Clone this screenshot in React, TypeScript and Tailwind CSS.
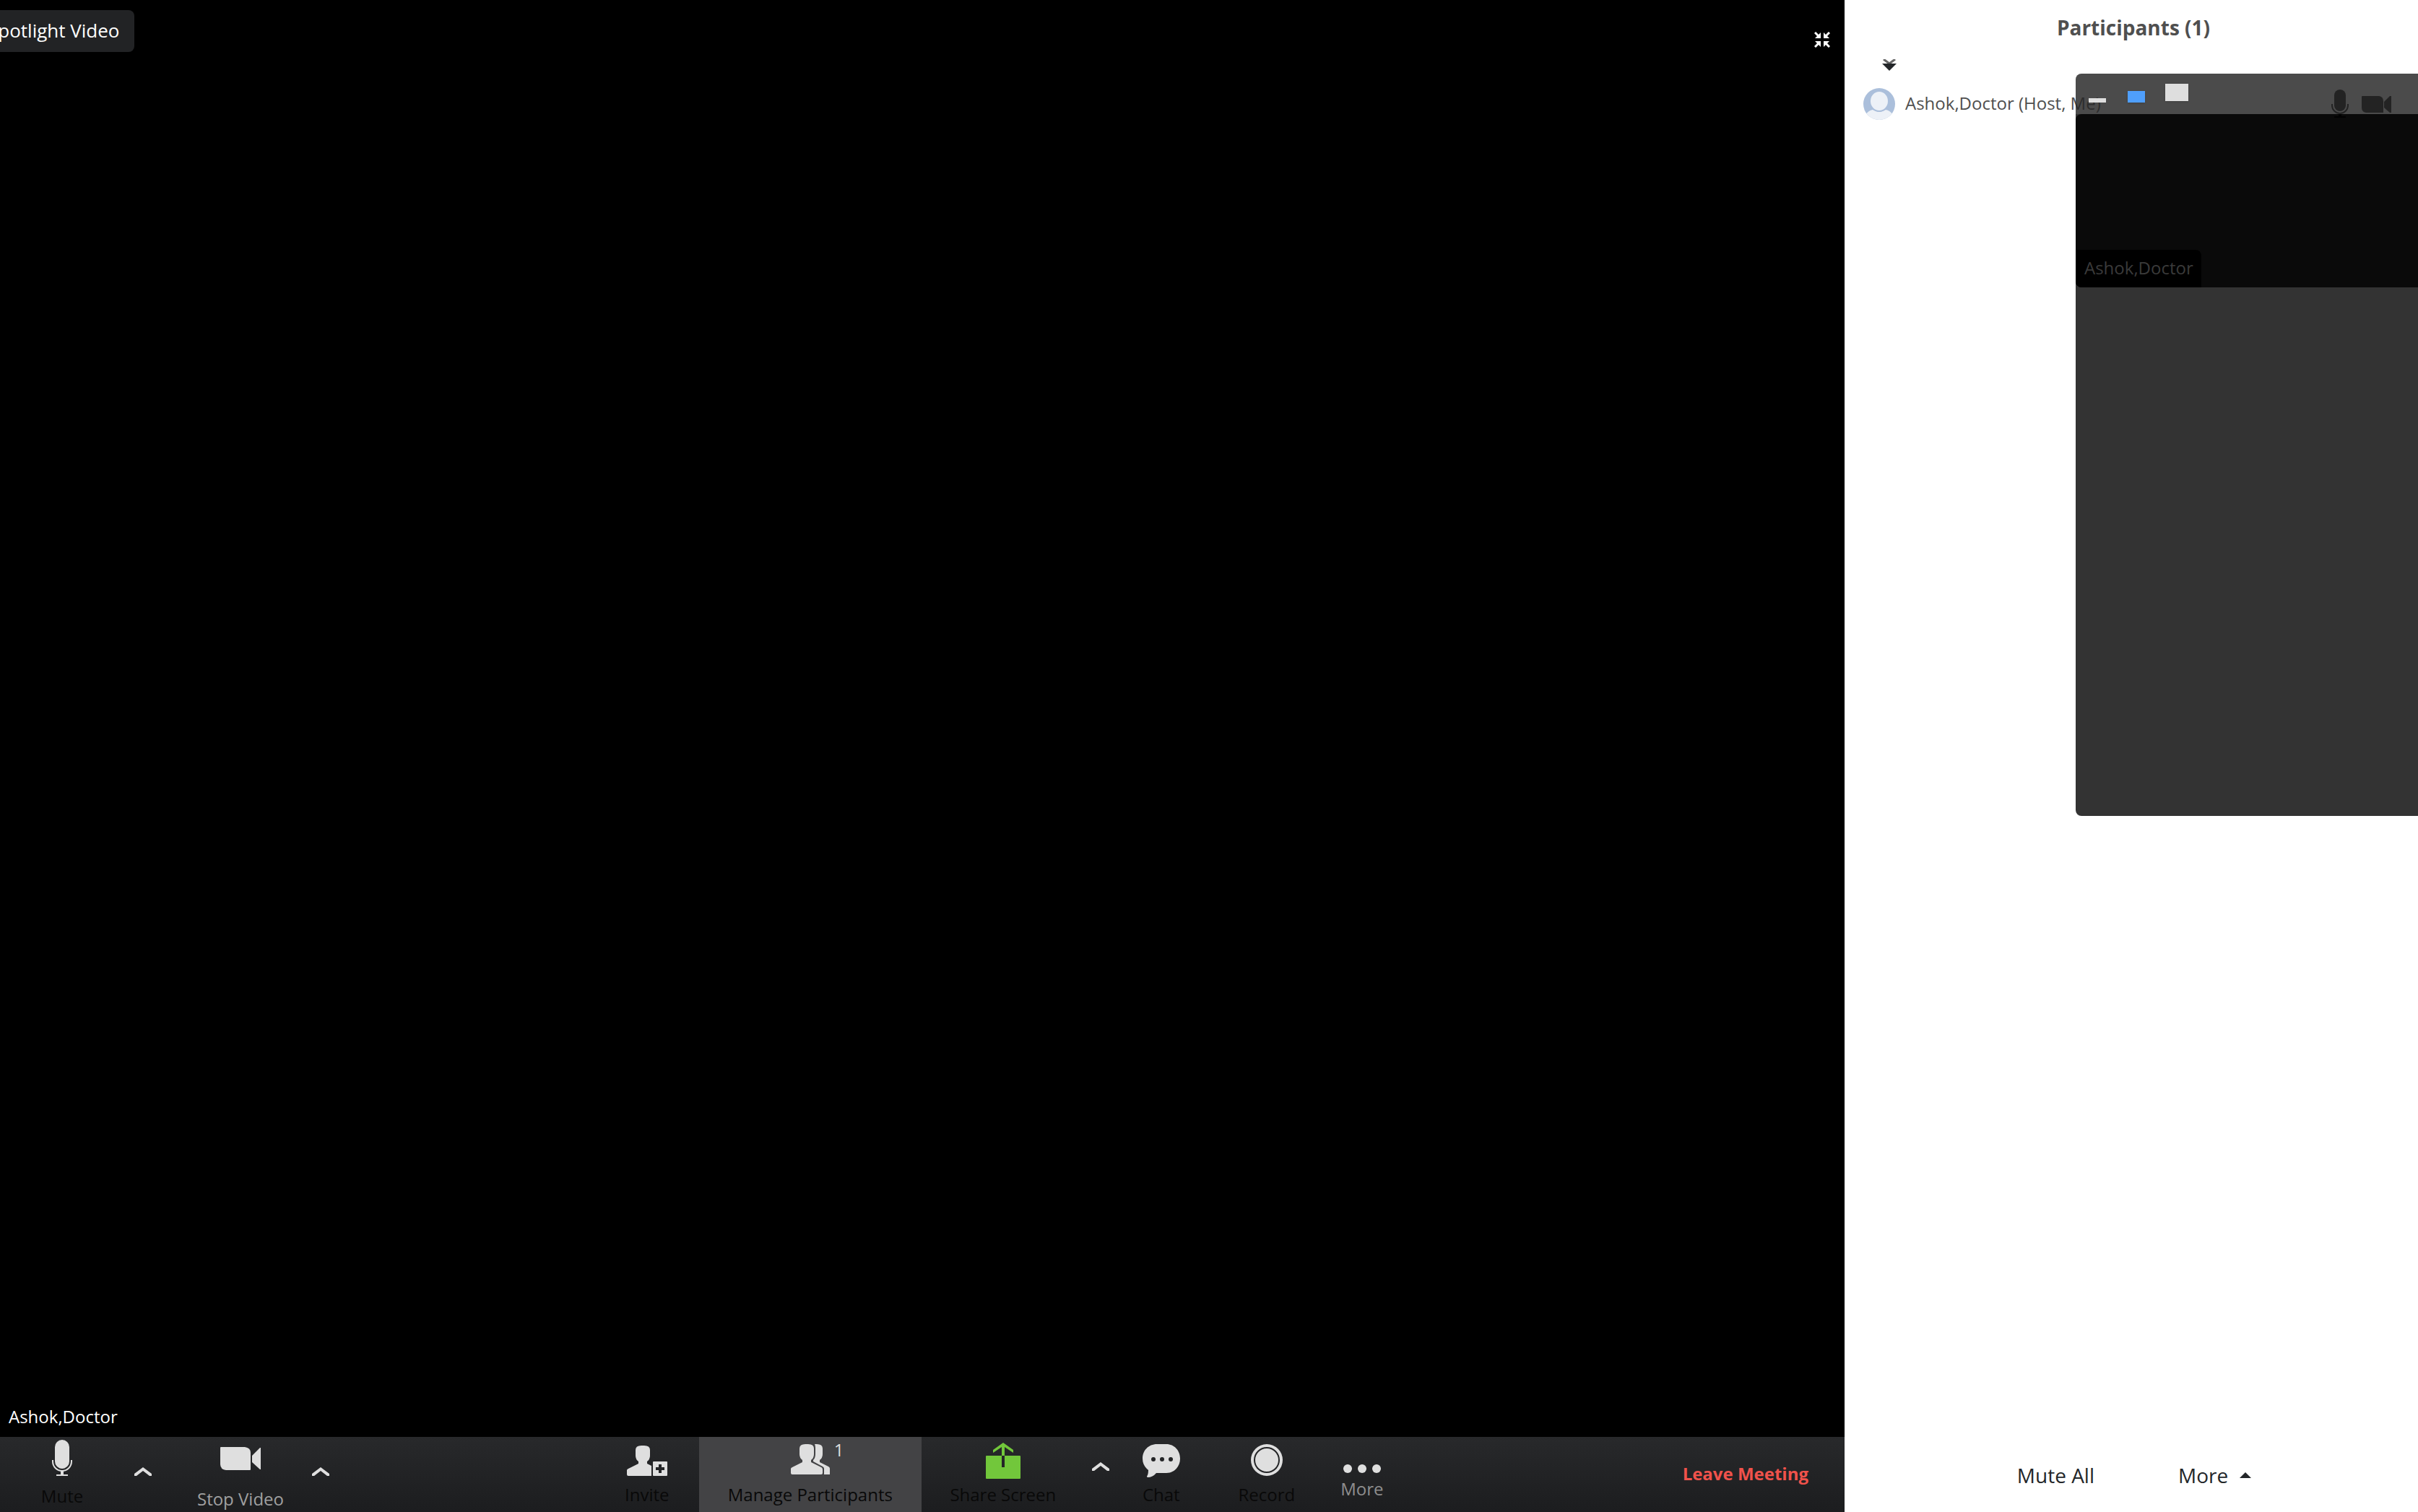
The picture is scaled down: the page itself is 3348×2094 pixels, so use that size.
import React from "react";

const noop = () => {};

function CollapseIcon() {
  return (
    <svg width="22" height="22" viewBox="0 0 22 22" fill="#fff" stroke="#fff" strokeWidth="3" aria-hidden="true">
      {["", "rotate(90 11 11)", "rotate(180 11 11)", "rotate(270 11 11)"].map((t) => (
        <g key={t} transform={t || undefined}>
          <path d="M1 1L6 6" />
          <path d="M1 9L9 9L9 1Z" stroke="none" />
        </g>
      ))}
    </svg>
  );
}

function MicIcon() {
  return (
    <svg width="28" height="50" viewBox="0 0 28 50" fill="#dfdfdf" aria-hidden="true">
      <rect x="4" y="0" width="20" height="40" rx="10" />
      <path d="M1 28V30A13 13 0 0 0 27 30V28" fill="none" stroke="#dfdfdf" strokeWidth="2" />
      <path d="M12 43H16V48H22V50H6V48H12Z" />
    </svg>
  );
}

function CameraIcon() {
  return (
    <svg width="56" height="32" viewBox="0 0 56 32" fill="#dfdfdf" aria-hidden="true">
      <path d="M1 0H34Q42 1 42 8V31Q42 32 41 32H8Q0 31 0 24V1Q0 0 1 0Z" />
      <path d="M44 12L55 1H56V31H55L44 21Z" />
    </svg>
  );
}

function Chevron() {
  return (
    <svg width="24" height="12" viewBox="0 0 24 12" fill="#dfdfdf" className="shrink-0" aria-hidden="true">
      <path d="M12 0L24 9V12H21L12 5L3 12H0V9Z" />
    </svg>
  );
}

function InviteIcon() {
  return (
    <svg width="56" height="42" viewBox="0 0 56 42" fill="#dfdfdf" aria-hidden="true">
      <path d="M12 6Q12 0 20 0H24Q32 0 32 6V14Q32 19 28 22V25L34 28V42H2Q0 42 0 40V34Q0 33 2 32L16 25V22Q12 19 12 14Z" />
      <path fillRule="evenodd" d="M37 22H55Q56 22 56 23V41Q56 42 55 42H37Q36 42 36 41V23Q36 22 37 22ZM44 26V30H40V34H44V38H48V34H52V30H48V26Z" />
    </svg>
  );
}

function PeopleIcon() {
  return (
    <svg width="54" height="42" viewBox="0 0 54 42" fill="#dfdfdf" aria-hidden="true">
      <path d="M12 6Q12 0 20 0H24Q32 0 32 6V14Q32 19 28 22V25L42 32Q44 33 44 35V40Q44 42 42 42H2Q0 42 0 40V34Q0 33 2 32L16 25V22Q12 19 12 14Z" />
      <path d="M33 0H36Q44 0 44 6V14Q44 19 40 22V25L52 31Q54 32 54 34V42H46V34Q46 32 44 31L31 24V22Q34 19 34 14V5Q34 2 33 0Z" />
    </svg>
  );
}

function ShareIcon() {
  return (
    <svg width="48" height="50" viewBox="0 0 48 50" fill="#72c73b" aria-hidden="true">
      <path d="M24 0L38 10V14L26 6V18H22V6L10 14V10Z" />
      <path d="M1 18H22V34H26V18H47Q48 18 48 19V49Q48 50 47 50H1Q0 50 0 49V19Q0 18 1 18Z" />
    </svg>
  );
}

function ChatIcon() {
  return (
    <svg width="52" height="46" viewBox="0 0 52 46" aria-hidden="true">
      <path fill="#dfdfdf" d="M20 0H33C44 0 52 9 52 20S44 40 33 40H19Q14 46 7 46Q5 45 7 43Q8 40 8 36C3 32 0 27 0 20C0 9 8 0 20 0Z" />
      <g fill="#242527">
        <circle cx="15" cy="21" r="3" />
        <circle cx="27" cy="21" r="3" />
        <circle cx="39" cy="21" r="3" />
      </g>
    </svg>
  );
}

function RecordIcon() {
  return (
    <svg width="44" height="44" viewBox="0 0 44 44" aria-hidden="true">
      <circle cx="22" cy="22" r="22" fill="#dfdfdf" />
      <circle cx="22" cy="22" r="17" fill="#dfdfdf" stroke="#242527" strokeWidth="2" />
    </svg>
  );
}

function DotsIcon() {
  return (
    <svg width="52" height="12" viewBox="0 0 52 12" fill="#dfdfdf" aria-hidden="true">
      <circle cx="6" cy="6" r="6" />
      <circle cx="26" cy="6" r="6" />
      <circle cx="46" cy="6" r="6" />
    </svg>
  );
}

function Avatar() {
  return (
    <svg width="44" height="44" viewBox="0 0 44 44" className="shrink-0" aria-hidden="true">
      <defs>
        <clipPath id="avatar-circle">
          <circle cx="22" cy="22" r="22" />
        </clipPath>
      </defs>
      <g clipPath="url(#avatar-circle)">
        <rect width="44" height="44" fill="#abbfdb" />
        <path d="M3 37Q7 31 13 30Q22 36 31 30Q37 31 41 37V44H3Z" fill="#edf1f7" />
        <ellipse cx="22" cy="18" rx="13" ry="14" fill="#edf1f7" stroke="#abbfdb" strokeWidth="2" />
      </g>
    </svg>
  );
}

function StatusIcons() {
  return (
    <svg width="84" height="40" viewBox="0 0 84 40" fill="#1c1c1c" className="mr-9 shrink-0" aria-hidden="true">
      <rect x="4" y="0" width="16" height="30" rx="8" />
      <path d="M1 20V22A11 11 0 0 0 23 22V20" fill="none" stroke="#1c1c1c" strokeWidth="2" />
      <path d="M10 34H14V37H20V39H4V37H10Z" />
      <path d="M43 9H66Q72 10 72 16V32H48Q42 31 42 25V10Q42 9 43 9Z" />
      <path d="M73 17L81 9H83V32H81L73 25Z" />
    </svg>
  );
}

function ToolButton({
  icon,
  label,
  className,
  iconClass,
  labelClass = "text-[#090909]",
}: {
  icon: React.ReactNode;
  label: string;
  className: string;
  iconClass: string;
  labelClass?: string;
}) {
  return (
    <button onClick={noop} className={`flex h-full shrink-0 flex-col items-center whitespace-nowrap text-2xl ${className}`}>
      <span className={`flex items-start ${iconClass}`}>{icon}</span>
      <span className={labelClass}>{label}</span>
    </button>
  );
}

function Toolbar() {
  return (
    <nav aria-label="Meeting controls" className="flex h-[104px] shrink-0 justify-between bg-linear-to-b from-[#28292b] to-[#1c1d1f]">
      <div className="flex">
        <ToolButton className="w-[172px]" icon={<MicIcon />} label="Mute" iconClass="h-[66px] pt-1" />
        <button aria-label="Audio options" className="flex w-[52px] justify-center pt-[42px]"><Chevron /></button>
        <ToolButton className="ml-2.5 w-[198px]" icon={<CameraIcon />} label="Stop Video" iconClass="h-[70px] pt-3.5" labelClass="text-[#a0a0a0]" />
        <button aria-label="Video options" className="flex w-6 justify-center pt-[42px]"><Chevron /></button>
      </div>
      <div className="mr-7 flex">
        <ToolButton className="w-[144px]" icon={<InviteIcon />} label="Invite" iconClass="h-16 pt-3" />
        <ToolButton
          className="w-[308px] bg-[#434345]"
          icon={<span className="relative"><PeopleIcon /><span className="absolute left-[60px] -top-1 text-2xl leading-6 text-[#dfdfdf]">1</span></span>}
          label="Manage Participants"
          iconClass="h-16 pt-2.5"
        />
        <ToolButton className="w-[226px]" icon={<ShareIcon />} label="Share Screen" iconClass="h-16 pt-2" />
        <button aria-label="Share options" className="flex w-11 justify-center pt-[35px]"><Chevron /></button>
        <ToolButton className="w-[124px]" icon={<ChatIcon />} label="Chat" iconClass="h-16 pt-2.5" />
        <ToolButton className="w-[168px]" icon={<RecordIcon />} label="Record" iconClass="h-16 pt-2.5" />
        <ToolButton className="w-[96px]" icon={<DotsIcon />} label="More" iconClass="h-14 pt-[38px]" labelClass="text-[#8e8e8e]" />
      </div>
      <button className="mr-[50px] pb-0.5 text-2xl font-bold text-[#f0524b]">Leave Meeting</button>
    </nav>
  );
}

function FloatingVideo() {
  return (
    <section aria-label="Floating video" className="absolute left-80 right-0 top-[102px] h-[1028px] overflow-hidden rounded-l-lg bg-black/80">
      <div className="flex h-14 items-start bg-white/12">
        <button aria-label="Minimize" className="ml-[18px] mt-[34px] h-1.5 w-6 bg-[#dedede]" />
        <button aria-label="Small view" className="ml-[30px] mt-6 h-4 w-6 bg-[#4f9ffc] shadow-sm" />
        <button aria-label="Large view" className="ml-7 mt-3.5 h-6 w-8 bg-[#dedede] shadow-sm" />
      </div>
      <div className="flex h-60 items-end overflow-hidden rounded-l-lg bg-black/80">
        <div className="flex h-[52px] w-[174px] items-center rounded-tr-lg bg-black pb-0.5 pl-3 text-2xl text-[#3a3a3a]">Ashok,Doctor</div>
      </div>
    </section>
  );
}

export default function App() {
  return (
    <div className="flex h-screen overflow-hidden bg-white font-['Open_Sans',sans-serif]">
      <main className="flex min-w-0 flex-1 flex-col bg-black text-white">
        <div className="flex items-start justify-between overflow-hidden pt-3.5">
          <button className="-ml-[37px] h-[58px] whitespace-nowrap rounded-lg bg-[#222325] px-5 pb-0.5 text-[26px]">Spotlight Video</button>
          <button aria-label="Exit full screen" className="mr-5 mt-[30px]"><CollapseIcon /></button>
        </div>
        <div className="flex flex-1 items-end px-3 pb-3 text-2xl">Ashok,Doctor</div>
        <Toolbar />
      </main>

      <aside className="relative flex w-[794px] shrink-0 flex-col">
        <h2 className="h-[76px] pt-5 pl-1.5 text-center text-[28px] leading-9 font-bold text-[#4f4f4f]">Participants (1)</h2>
        <button aria-label="Collapse list" className="ml-[52px] mt-1.5 h-4 w-5">
          <svg width="20" height="16" viewBox="0 0 20 16" aria-hidden="true">
            <path d="M2 0L10 6L18 0" fill="none" stroke="#666" strokeWidth="3" />
            <path d="M0 6H20L10 16Z" fill="#232629" />
          </svg>
        </button>
        <ul className="flex-1 pt-6">
          <li className="flex items-center gap-3.5 pl-[26px]">
            <Avatar />
            <span className="flex-1 pb-0.5 text-2xl text-[#4f4f4f]">Ashok,Doctor (Host, Me)</span>
            <StatusIcons />
          </li>
        </ul>
        <footer className="flex h-[102px] items-center justify-center pl-2 text-[28px] text-[#232629]">
          <button>Mute All</button>
          <button className="ml-[116px] flex items-center gap-4">
            More
            <svg width="16" height="8" viewBox="0 0 16 8" fill="#232629" aria-hidden="true"><path d="M8 0L16 8H0Z" /></svg>
          </button>
        </footer>
        <FloatingVideo />
      </aside>
    </div>
  );
}
